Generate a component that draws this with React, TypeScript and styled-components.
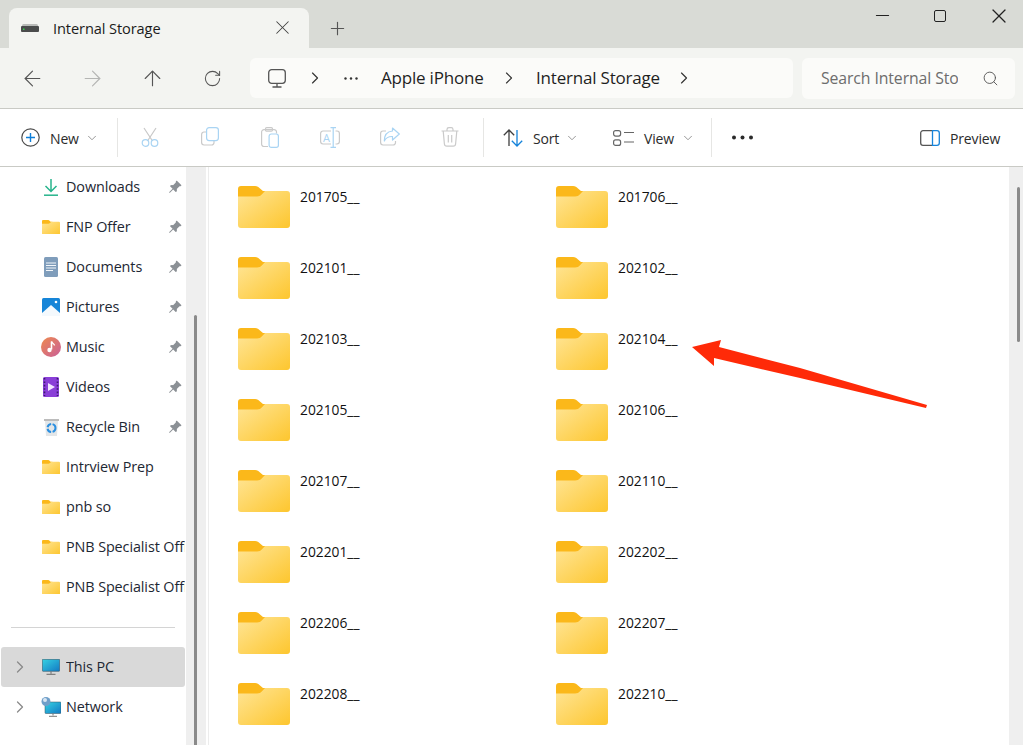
import React from 'react';
import styled, { createGlobalStyle } from 'styled-components';
import { ArrowLeft, ArrowRight, ArrowUp, ChevronDown, ChevronRight, Minus, Plus, RotateCw, Search, X } from 'lucide-react';
import { BsPinAngleFill } from 'react-icons/bs';

const GlobalStyle = createGlobalStyle`
  html, body {
    margin: 0;
    padding: 0;
    height: 100%;
    overflow: hidden;
    background: #ffffff;
  }
  body {
    font-family: "Open Sans", "Noto Sans", "Liberation Sans", sans-serif;
    color: #1b1b1b;
  }
`;

const Window = styled.div`
  position: relative;
  width: 1023px;
  height: 745px;
  overflow: hidden;
  display: flex;
  flex-direction: column;
`;

const TabStrip = styled.div`
  height: 48px;
  flex: none;
  background: #d9dbd6;
  display: flex;
  align-items: flex-end;
  padding-left: 9px;
`;

const Tab = styled.div`
  width: 300px;
  height: 40px;
  background: #f3f4f1;
  border-radius: 8px 8px 0 0;
  display: flex;
  align-items: center;
  padding: 0 15px 1px 12px;
  box-sizing: border-box;
`;

const TabTitle = styled.span`
  flex: 1;
  margin-left: 14px;
  font-size: 14.6px;
  letter-spacing: -0.1px;
`;

const NewTab = styled.div`
  width: 21px;
  height: 40px;
  margin-left: 18px;
  display: flex;
  align-items: center;
  color: #555;
`;

const WindowControls = styled.div`
  margin-left: auto;
  align-self: flex-start;
  display: flex;
  height: 31px;
  padding-right: 12px;
  color: #222;
`;

const WindowButton = styled.div<{ $mr?: number }>`
  width: 59px;
  box-sizing: border-box;
  padding-right: ${p => p.$mr ?? 0}px;
  display: flex;
  align-items: center;
  justify-content: flex-end;
`;

const MaxBox = styled.div`
  width: 10px;
  height: 10px;
  border: 1.3px solid #222;
  border-radius: 2px;
`;

const NavBar = styled.div`
  height: 60px;
  flex: none;
  box-sizing: content-box;
  background: #f3f4f1;
  border-bottom: 1px solid #c9cac5;
  display: flex;
  align-items: center;
  padding-left: 2px;
`;

const NavButton = styled.div<{ $disabled?: boolean }>`
  width: 60px;
  display: flex;
  justify-content: center;
  color: ${p => (p.$disabled ? '#b4b5b3' : '#555555')};
`;

const Breadcrumb = styled.div`
  width: 543px;
  height: 40px;
  margin-left: 8px;
  box-sizing: border-box;
  padding-left: 18px;
  background: #fbfbf9;
  border-radius: 6px;
  display: flex;
  align-items: center;
  color: #333;
`;

const CrumbIcon = styled.div<{ $mr: number }>`
  display: flex;
  margin-right: ${p => p.$mr}px;
`;

const CrumbLabel = styled.div<{ $w: number }>`
  width: ${p => p.$w}px;
  margin: 0 15px 1px 17px;
  font-size: 17px;
  letter-spacing: -0.2px;
  white-space: nowrap;
  color: #1f1f1f;
`;

const SearchBox = styled.div`
  width: 213px;
  height: 41px;
  margin-left: 9px;
  box-sizing: border-box;
  padding: 0 16px 0 19px;
  background: #fbfbf9;
  border-radius: 6px;
  display: flex;
  align-items: center;
  color: #555;
`;

const SearchText = styled.div`
  width: 137px;
  overflow: hidden;
  white-space: nowrap;
  margin-right: auto;
  font-size: 15.8px;
  letter-spacing: -0.1px;
  color: #6d6d6d;
`;

const Toolbar = styled.div`
  height: 57px;
  flex: none;
  background: #ffffff;
  border-bottom: 1px solid #c9cac5;
  display: flex;
  align-items: center;
`;

const Action = styled.div<{ $w: number; $pl?: number }>`
  width: ${p => p.$w}px;
  padding-left: ${p => p.$pl ?? 0}px;
  box-sizing: border-box;
  display: flex;
  align-items: center;
`;

const ActionLabel = styled.span<{ $w: number }>`
  width: ${p => p.$w}px;
  margin: 1px 5px 0 10px;
  font-size: 14px;
  letter-spacing: -0.15px;
  white-space: nowrap;
  color: #2b2b2b;
`;

const Caret = styled.div`
  display: flex;
  color: #777;
`;

const ToolSeparator = styled.div`
  width: 1px;
  height: 39px;
  background: #e6e6e4;
`;

const ToolGroup = styled.div`
  display: flex;
  margin: 0 3px 0 2px;
`;

const ToolButton = styled.div`
  width: 60px;
  display: flex;
  justify-content: center;
`;

const Body = styled.div`
  flex: 1;
  min-height: 0;
  display: flex;
`;

const Sidebar = styled.nav`
  width: 186px;
  flex: none;
  overflow: hidden;
`;

const SideRow = styled.div<{ $active?: boolean }>`
  height: 40px;
  margin-left: 1px;
  border-radius: 3px;
  background: ${p => (p.$active ? '#d9d9d9' : 'transparent')};
  display: flex;
  align-items: center;
  width: 184px;
`;

const Expander = styled.div`
  width: 20px;
  margin-left: 9px;
  display: flex;
  color: #8a8a8a;
`;

const SideIcon = styled.div<{ $indent?: boolean }>`
  width: 24px;
  margin-left: ${p => (p.$indent ? 9 : 38)}px;
  display: flex;
  justify-content: center;
`;

const SideLabel = styled.span`
  margin: 0 0 1px 3px;
  flex: 1;
  overflow: hidden;
  white-space: nowrap;
  font-size: 14.4px;
  letter-spacing: -0.1px;
  color: #1d2733;
`;

const PinSlot = styled.div`
  display: flex;
  color: #8b9095;
  margin-right: 3px;
`;

const SideDivider = styled.div`
  height: 1px;
  margin: 20px 11px 19px;
  width: 164px;
  background: #d4d4d4;
`;

const Track = styled.div<{ $w: number }>`
  width: ${p => p.$w}px;
  flex: none;
  background: #efefef;
  display: flex;
  justify-content: center;
`;

const Thumb = styled.div<{ $top: number; $h: number; $shift: number }>`
  width: 3px;
  height: ${p => p.$h}px;
  margin-top: ${p => p.$top}px;
  transform: translateX(${p => p.$shift}px);
  background: #8a8a8a;
  border-radius: 2px;
`;

const Pane = styled.main`
  flex: 1;
  min-width: 0;
  margin-left: 2px;
  border-left: 1px solid #ececec;
  padding: 19px 0 0 29px;
  display: grid;
  grid-template-columns: 318px 318px;
  grid-auto-rows: 71px;
  align-content: start;
  overflow: hidden;
`;

const FolderItem = styled.div`
  display: flex;
  align-items: flex-start;
  gap: 10px;
`;

const FolderName = styled.span`
  font-size: 13.8px;
  line-height: 22px;
  color: #111;
`;

const ArrowOverlay = styled.svg`
  position: absolute;
  left: 680px;
  top: 330px;
`;

const Folder = ({ w }: { w: number }) => (
  <svg width={w} height={(w * 42) / 52} viewBox="0 0 52 42" style={{ display: 'block' }}>
    <defs>
      <linearGradient id="folderBody" x1="0" y1="0" x2="1" y2="1">
        <stop offset="0" stopColor="#ffe596" />
        <stop offset="1" stopColor="#fdc62e" />
      </linearGradient>
    </defs>
    <path d="M0 3a3 3 0 0 1 3-3h14c2.500 0 3.500 1 5 2.500L25 5H30V14H0Z" fill="#fbb81a" />
    <path d="M0 10.500H19c2.500 0 3.500-.8 5-2.200L27 5H49a3 3 0 0 1 3 3V39a3 3 0 0 1-3 3H3a3 3 0 0 1-3-3Z" fill="url(#folderBody)" />
  </svg>
);

const DriveIcon = () => (
  <svg width="18" height="8" viewBox="0 0 18 8">
    <rect x="1" y="0" width="16" height="3" rx="1.500" fill="#b9bbb9" />
    <rect x="0" y="2" width="18" height="6" rx="1" fill="#4a4c4c" />
    <rect x="2" y="4.500" width="1.500" height="1.500" fill="#36d24c" />
  </svg>
);

const MonitorOutline = () => (
  <svg width="18" height="19" viewBox="0 0 18 19" fill="none" stroke="#555" strokeWidth="1.300">
    <rect x=".7" y=".7" width="16.600" height="13.600" rx="3" />
    <path d="M9 15v2.500M4.500 18h9" />
  </svg>
);

const NewIcon = () => (
  <svg width="19" height="19" viewBox="0 0 19 19" fill="none">
    <circle cx="9.500" cy="9.500" r="8.700" stroke="#4b4b4b" strokeWidth="1.200" />
    <path d="M9.500 5v9M5 9.500h9" stroke="#0f7fd8" strokeWidth="1.400" />
  </svg>
);

const CutIcon = () => (
  <svg width="18" height="20" viewBox="0 0 18 20" fill="none" strokeWidth="1.200">
    <path d="M3 1l8.500 13M15 1L6.500 14" stroke="#c8c8c8" />
    <circle cx="4.500" cy="16" r="3.300" stroke="#a9d4f3" />
    <circle cx="13.500" cy="16" r="3.300" stroke="#a9d4f3" />
  </svg>
);

const CopyIcon = () => (
  <svg width="18" height="19" viewBox="0 0 18 19" fill="none" strokeWidth="1.200">
    <path d="M5 5H3a2.400 2.400 0 0 0-2.400 2.400V15.600A2.400 2.400 0 0 0 3 18H10.500A2.400 2.400 0 0 0 13 15.500V14" stroke="#cacaca" />
    <rect x="5.600" y=".6" width="11.800" height="13" rx="2.500" stroke="#a9d4f3" />
  </svg>
);

const PasteIcon = () => (
  <svg width="18" height="21" viewBox="0 0 18 21" fill="none" strokeWidth="1.200">
    <path d="M7 19.500H3A2.400 2.400 0 0 1 .6 17V5A2.400 2.400 0 0 1 3 2.600H13A2.400 2.400 0 0 1 15.500 5V6.500" stroke="#cacaca" />
    <rect x="4.500" y=".6" width="7" height="3.500" rx="1.200" stroke="#cacaca" />
    <rect x="8.100" y="7" width="9.300" height="13.400" rx="2.200" stroke="#a9d4f3" />
  </svg>
);

const RenameLetter = styled.text`
  font-family: "Open Sans", sans-serif;
  font-size: 11px;
  fill: #a9d4f3;
`;

const RenameIcon = () => (
  <svg width="20" height="21" viewBox="0 0 20 21" fill="none" strokeWidth="1.200">
    <path d="M11 4H3a2.400 2.400 0 0 0-2.400 2.400V14.600A2.400 2.400 0 0 0 3 17H11M15.500 4H17a2.400 2.400 0 0 1 2.400 2.400V14.600A2.400 2.400 0 0 1 17 17H15.500" stroke="#cacaca" />
    <path d="M13.200 1V20M10.500 .6h5.500M10.500 20.400h5.500" stroke="#a9d4f3" />
    <RenameLetter x="3" y="14.500">A</RenameLetter>
  </svg>
);

const ShareIcon = () => (
  <svg width="20" height="19" viewBox="0 0 20 19" fill="none" strokeWidth="1.200">
    <path d="M6 4H3A2.400 2.400 0 0 0 .6 6.400V15.600A2.400 2.400 0 0 0 3 18H13A2.400 2.400 0 0 0 15.500 15.500V14" stroke="#cacaca" />
    <path d="M12.500 1l6.800 6-6.800 6V9.500C8.500 9.300 6 10.800 4.300 14c0-6 3-9.500 8.200-10Z" stroke="#a9d4f3" strokeLinejoin="round" />
  </svg>
);

const DeleteIcon = () => (
  <svg width="18" height="20" viewBox="0 0 18 20" fill="none" stroke="#cacaca" strokeWidth="1.200">
    <path d="M.5 4h17M6 4V2.500A1.800 1.800 0 0 1 7.800 .7h2.400A1.800 1.800 0 0 1 12 2.500V4M2.200 4l1.200 13a2.400 2.400 0 0 0 2.400 2.200h6.400a2.400 2.400 0 0 0 2.400-2.200L15.800 4M7.300 8v7.500M10.700 8v7.500" />
  </svg>
);

const SortIcon = () => (
  <svg width="20" height="18" viewBox="0 0 20 18" fill="none" strokeWidth="1.300">
    <path d="M6 17V1M.8 6.200L6 1l5.200 5.200" stroke="#3f3f3f" />
    <path d="M14 1V17M8.800 11.800L14 17l5.200-5.200" stroke="#1583da" />
  </svg>
);

const ViewIcon = () => (
  <svg width="21" height="16" viewBox="0 0 21 16" fill="none" stroke="#666" strokeWidth="1.200">
    <rect x=".6" y=".6" width="7" height="5.500" rx="2" />
    <rect x=".6" y="9.900" width="7" height="5.500" rx="2" />
    <path d="M11 2.500H21M11 12H21" />
  </svg>
);

const PreviewIcon = () => (
  <svg width="20" height="16" viewBox="0 0 20 16" fill="none" strokeWidth="1.300">
    <path d="M12.500 .7H3A2.300 2.300 0 0 0 .7 3V13A2.300 2.300 0 0 0 3 15.300H12.500" stroke="#555" />
    <path d="M12.500 .7H17A2.300 2.300 0 0 1 19.300 3V13A2.300 2.300 0 0 1 17 15.300H12.500Z" stroke="#1583da" />
  </svg>
);

const DotsIcon = () => (
  <svg width="21" height="5" viewBox="0 0 21 5" fill="#2a2a2a">
    <circle cx="2" cy="2.500" r="2" />
    <circle cx="10.500" cy="2.500" r="2" />
    <circle cx="19" cy="2.500" r="2" />
  </svg>
);

const SmallDots = () => (
  <svg width="14" height="3" viewBox="0 0 14 3" fill="#333">
    <circle cx="1.500" cy="1.500" r="1.200" />
    <circle cx="7" cy="1.500" r="1.200" />
    <circle cx="12.500" cy="1.500" r="1.200" />
  </svg>
);

const DownloadIcon = () => (
  <svg width="14" height="17" viewBox="0 0 14 17" fill="none" stroke="#27b48c" strokeWidth="1.500">
    <path d="M7 0V12M1.500 7L7 12.500 12.500 7" />
    <path d="M0 16.200H14" />
  </svg>
);

const DocumentIcon = () => (
  <svg width="14" height="20" viewBox="0 0 14 20">
    <rect width="14" height="20" rx="1.500" fill="#7f9dbb" />
    <path d="M2 6h10M2 8.500h10M2 11h10M2 13.500h7" stroke="#f2f6fa" strokeWidth="1" />
  </svg>
);

const PictureIcon = () => (
  <svg width="18" height="18" viewBox="0 0 18 18">
    <rect width="18" height="18" rx="1.500" fill="#1685d8" />
    <circle cx="14" cy="4" r="1.300" fill="#fff" />
    <path d="M0 15L9 7l9 8v3H0Z" fill="#f4f9fd" />
  </svg>
);

const MusicIcon = () => (
  <svg width="20" height="20" viewBox="0 0 20 20">
    <defs>
      <linearGradient id="musicDisc" x1="0" y1="0" x2="1" y2="1">
        <stop offset="0" stopColor="#ee8a4e" />
        <stop offset="1" stopColor="#c95f9a" />
      </linearGradient>
    </defs>
    <circle cx="10" cy="10" r="10" fill="url(#musicDisc)" />
    <path d="M10.500 4.500v8" stroke="#fff" strokeWidth="1.600" />
    <path d="M10.500 4.500c.5 2 3 2 3 4" stroke="#fff" strokeWidth="1.300" fill="none" />
    <circle cx="8.500" cy="13" r="2.200" fill="#fff" />
  </svg>
);

const VideoIcon = () => (
  <svg width="16" height="20" viewBox="0 0 16 20">
    <rect width="16" height="20" rx="1.500" fill="#8a3fd8" />
    <path d="M1.500 1v18M14.500 1v18" stroke="#3c1a6e" strokeWidth="1.600" strokeDasharray="1.600 1.800" />
    <path d="M5 6l7 4-7 4Z" fill="#f2e6ff" />
  </svg>
);

const RecycleIcon = () => (
  <svg width="15" height="18" viewBox="0 0 15 18">
    <rect x="0" y="1" width="15" height="2" fill="#bcbcbc" />
    <path d="M1 3h13l-1 15H2Z" fill="#e3e6e8" />
    <circle cx="7.500" cy="10" r="4" fill="none" stroke="#2b8fe0" strokeWidth="2" strokeDasharray="5 1.500" />
  </svg>
);

const PcIcon = () => (
  <svg width="18" height="16" viewBox="0 0 18 16">
    <defs>
      <linearGradient id="pcScreen" x1="0" y1="0" x2="1" y2="1">
        <stop offset="0" stopColor="#35d2e2" />
        <stop offset="1" stopColor="#1279c4" />
      </linearGradient>
    </defs>
    <rect x=".3" y=".3" width="17.400" height="12" rx=".8" fill="url(#pcScreen)" stroke="#37505f" strokeWidth=".6" />
    <path d="M9 12.500v2.300M4.500 15.300h9" stroke="#6a6a6a" strokeWidth="1" />
  </svg>
);

const NetworkIcon = () => (
  <svg width="20" height="20" viewBox="0 0 20 20">
    <defs>
      <linearGradient id="netScreen" x1="0" y1="0" x2="1" y2="1">
        <stop offset="0" stopColor="#35d2e2" />
        <stop offset="1" stopColor="#1279c4" />
      </linearGradient>
    </defs>
    <rect x="4" y="5" width="16" height="11.500" rx=".8" fill="url(#netScreen)" stroke="#37505f" strokeWidth=".5" />
    <path d="M12 16.500v2M8 19.300h8" stroke="#777" strokeWidth="1" />
    <circle cx="5" cy="4.500" r="4.500" fill="#6f9fc9" />
    <circle cx="4" cy="3" r="2" fill="#d8e6f2" />
  </svg>
);

const favorites: { name: string; icon: React.ReactNode; pinned?: boolean }[] = [
  { name: 'Downloads', icon: <DownloadIcon />, pinned: true },
  { name: 'FNP Offer', icon: <Folder w={18} />, pinned: true },
  { name: 'Documents', icon: <DocumentIcon />, pinned: true },
  { name: 'Pictures', icon: <PictureIcon />, pinned: true },
  { name: 'Music', icon: <MusicIcon />, pinned: true },
  { name: 'Videos', icon: <VideoIcon />, pinned: true },
  { name: 'Recycle Bin', icon: <RecycleIcon />, pinned: true },
  { name: 'Intrview Prep', icon: <Folder w={18} /> },
  { name: 'pnb so', icon: <Folder w={18} /> },
  { name: 'PNB Specialist Officer', icon: <Folder w={18} /> },
  { name: 'PNB Specialist Officer', icon: <Folder w={18} /> },
];

const folders = [
  '201705__', '201706__', '202101__', '202102__', '202103__', '202104__', '202105__', '202106__',
  '202107__', '202110__', '202201__', '202202__', '202206__', '202207__', '202208__', '202210__',
];

const App: React.FC = () => (
  <Window>
    <GlobalStyle />
    <TabStrip>
      <Tab>
        <DriveIcon />
        <TabTitle>Internal Storage</TabTitle>
        <X size={23} strokeWidth={1.1} color="#444" />
      </Tab>
      <NewTab>
        <Plus size={21} strokeWidth={1.3} />
      </NewTab>
      <WindowControls>
        <WindowButton>
          <Minus size={21} strokeWidth={1.2} />
        </WindowButton>
        <WindowButton $mr={6}>
          <MaxBox />
        </WindowButton>
        <WindowButton>
          <X size={24} strokeWidth={1.2} />
        </WindowButton>
      </WindowControls>
    </TabStrip>

    <NavBar>
      <NavButton><ArrowLeft size={25} strokeWidth={1.1} /></NavButton>
      <NavButton $disabled><ArrowRight size={25} strokeWidth={1.1} /></NavButton>
      <NavButton><ArrowUp size={25} strokeWidth={1.1} /></NavButton>
      <NavButton><RotateCw size={19} strokeWidth={1.3} /></NavButton>
      <Breadcrumb>
        <CrumbIcon $mr={19}><MonitorOutline /></CrumbIcon>
        <CrumbIcon $mr={19}><ChevronRight size={20} strokeWidth={1.4} /></CrumbIcon>
        <CrumbIcon $mr={6}><SmallDots /></CrumbIcon>
        <CrumbLabel $w={103}>Apple iPhone</CrumbLabel>
        <CrumbIcon $mr={0}><ChevronRight size={20} strokeWidth={1.4} /></CrumbIcon>
        <CrumbLabel $w={123}>Internal Storage</CrumbLabel>
        <CrumbIcon $mr={0}><ChevronRight size={20} strokeWidth={1.4} /></CrumbIcon>
      </Breadcrumb>
      <SearchBox>
        <SearchText>Search Internal Storage</SearchText>
        <Search size={17} strokeWidth={1.3} />
      </SearchBox>
    </NavBar>

    <Toolbar>
      <Action $w={117} $pl={21}>
        <NewIcon />
        <ActionLabel $w={30}>New</ActionLabel>
        <Caret><ChevronDown size={14} strokeWidth={1.3} /></Caret>
      </Action>
      <ToolSeparator />
      <ToolGroup>
        <ToolButton><CutIcon /></ToolButton>
        <ToolButton><CopyIcon /></ToolButton>
        <ToolButton><PasteIcon /></ToolButton>
        <ToolButton><RenameIcon /></ToolButton>
        <ToolButton><ShareIcon /></ToolButton>
        <ToolButton><DeleteIcon /></ToolButton>
      </ToolGroup>
      <ToolSeparator />
      <Action $w={129} $pl={19}>
        <SortIcon />
        <ActionLabel $w={27}>Sort</ActionLabel>
        <Caret><ChevronDown size={14} strokeWidth={1.3} /></Caret>
      </Action>
      <Action $w={98}>
        <ViewIcon />
        <ActionLabel $w={32}>View</ActionLabel>
        <Caret><ChevronDown size={14} strokeWidth={1.3} /></Caret>
      </Action>
      <ToolSeparator />
      <Action $w={208} $pl={20}>
        <DotsIcon />
      </Action>
      <Action $w={103}>
        <PreviewIcon />
        <ActionLabel $w={51}>Preview</ActionLabel>
      </Action>
    </Toolbar>

    <Body>
      <Sidebar>
        {favorites.map((item, i) => (
          <SideRow key={i}>
            <SideIcon>{item.icon}</SideIcon>
            <SideLabel>{item.name}</SideLabel>
            {item.pinned && (
              <PinSlot><BsPinAngleFill size={14} /></PinSlot>
            )}
          </SideRow>
        ))}
        <SideDivider />
        <SideRow $active>
          <Expander><ChevronRight size={20} strokeWidth={1.5} /></Expander>
          <SideIcon $indent><PcIcon /></SideIcon>
          <SideLabel>This PC</SideLabel>
        </SideRow>
        <SideRow>
          <Expander><ChevronRight size={20} strokeWidth={1.5} /></Expander>
          <SideIcon $indent><NetworkIcon /></SideIcon>
          <SideLabel>Network</SideLabel>
        </SideRow>
      </Sidebar>
      <Track $w={20}>
        <Thumb $top={148} $h={500} $shift={-1} />
      </Track>
      <Pane>
        {folders.map(name => (
          <FolderItem key={name}>
            <Folder w={52} />
            <FolderName>{name}</FolderName>
          </FolderItem>
        ))}
      </Pane>
      <Track $w={14}>
        <Thumb $top={20} $h={155} $shift={2} />
      </Track>
    </Body>

    <ArrowOverlay width="260" height="90" viewBox="680 330 260 90">
      <path d="M692 347L721 340 719 347 800 368 927 405 926 408 800 378 714 358 714 366Z" fill="#ff2a08" />
    </ArrowOverlay>
  </Window>
);

export default App;
